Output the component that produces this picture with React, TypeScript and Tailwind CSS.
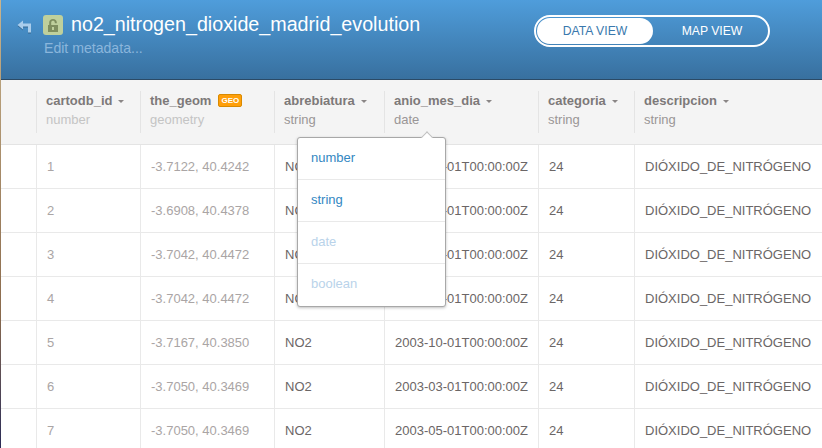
const COLUMNS = [
  { name: 'cartodb_id', type: 'number', muted: true },
  { name: 'the_geom', type: 'geometry', muted: true, geo: true },
  { name: 'abrebiatura', type: 'string' },
  { name: 'anio_mes_dia', type: 'date' },
  { name: 'categoria', type: 'string' },
  { name: 'descripcion', type: 'string' },
];

const ROWS = [
  ['1', '-3.7122, 40.4242', 'NO2', '2003-01-01T00:00:00Z', '24', 'DIÓXIDO_DE_NITRÓGENO'],
  ['2', '-3.6908, 40.4378', 'NO2', '2003-02-01T00:00:00Z', '24', 'DIÓXIDO_DE_NITRÓGENO'],
  ['3', '-3.7042, 40.4472', 'NO2', '2003-04-01T00:00:00Z', '24', 'DIÓXIDO_DE_NITRÓGENO'],
  ['4', '-3.7042, 40.4472', 'NO2', '2003-06-01T00:00:00Z', '24', 'DIÓXIDO_DE_NITRÓGENO'],
  ['5', '-3.7167, 40.3850', 'NO2', '2003-10-01T00:00:00Z', '24', 'DIÓXIDO_DE_NITRÓGENO'],
  ['6', '-3.7050, 40.3469', 'NO2', '2003-03-01T00:00:00Z', '24', 'DIÓXIDO_DE_NITRÓGENO'],
  ['7', '-3.7050, 40.3469', 'NO2', '2003-05-01T00:00:00Z', '24', 'DIÓXIDO_DE_NITRÓGENO'],
];

const TYPE_OPTIONS = [
  { label: 'number', enabled: true },
  { label: 'string', enabled: true },
  { label: 'date', enabled: false },
  { label: 'boolean', enabled: false },
];

function BackIcon() {
  return (
    <svg width="15" height="13" viewBox="0 0 15 13" className="mt-[2px] drop-shadow-[0_1px_0_rgba(0,0,0,0.25)]">
      <path d="M0.5 5 L6 0.5 V3.5 H14 V12.5 H11 V6.5 H6 V9.5 Z" fill="#a9cdec" />
    </svg>
  );
}

function LockBadge() {
  return (
    <div className="flex h-5 w-5 items-center justify-center rounded-[3px] bg-[#bfd09c]">
      <svg width="10" height="13" viewBox="0 0 10 13">
        <path
          fillRule="evenodd"
          d="M0 6 H1.2 V3.4 C1.2 1.3 2.8 0 5 0 C7.2 0 8.8 1.3 8.8 3.4 V4.2 H6.8 V3.4 C6.8 2.4 6 1.8 5 1.8 C4 1.8 3.2 2.4 3.2 3.4 V6 H10 V13 H0 Z M4 8 V11 H6 V8 Z"
          fill="#7f8f5f"
        />
      </svg>
    </div>
  );
}

function Caret() {
  return <span className="ml-[6px] mt-[1px] inline-block border-x-[3px] border-t-[3px] border-x-transparent border-t-[#8a8686]" />;
}

export default function App() {
  return (
    <div className="relative flex h-[448px] w-[822px] overflow-hidden bg-white font-['Liberation_Sans',Arial,sans-serif]">
      {/* sliver of desktop behind the window */}
      <div className="w-px shrink-0 bg-gradient-to-b from-[#c9b48c] via-[#8a6a4c] via-70% to-[#2b2a55]" />

      <div className="min-w-0 flex-1">
        <header className="flex h-[80px] items-start justify-between border-b border-[#2b4a66] bg-gradient-to-b from-[#4f9ddb] to-[#38709f] pl-[16px] pr-[52px]">
          <div className="pt-[15px]">
            <div className="flex h-5 items-center">
              <BackIcon />
              <div className="ml-[11px]">
                <LockBadge />
              </div>
              <h1 className="ml-[8px] -translate-y-px text-[19.7px] leading-5 text-white">no2_nitrogen_dioxide_madrid_evolution</h1>
            </div>
            <p className="ml-[27px] mt-[3px] text-[14.1px] leading-5 text-[#8bb6dc]">Edit metadata...</p>
          </div>

          <div className="mt-[15px] flex h-[32px] w-[236px] items-center rounded-full border-2 border-white p-px text-[12.2px]">
            <div className="flex h-[26px] w-[116px] items-center justify-center rounded-full bg-white text-[#3a78ad]">DATA VIEW</div>
            <div className="flex-1 pl-[4px] text-center text-white">MAP VIEW</div>
          </div>
        </header>

        <div className="grid grid-cols-[35px_104px_134px_110px_154px_96px_1fr] text-[13px]">
          {/* head */}
          <div className="col-span-7 grid h-[65px] grid-cols-subgrid items-center border-b border-[#e4e4e4] bg-[#f4f4f4] pb-px">
            <div />
            {COLUMNS.map((col) => (
              <div key={col.name} className="h-[42px] border-l border-[#e4e4e4] pl-[9px]">
                <div className="flex h-[20px] items-center font-bold text-[#7d7979]">
                  {col.name}
                  {col.geo ? (
                    <span className="ml-[7px] flex h-[13px] w-[24px] items-center justify-center rounded-[2px] border border-[#d98a00] bg-[#ff9f0a] text-[8px] font-bold text-white">
                      GEO
                    </span>
                  ) : (
                    <Caret />
                  )}
                </div>
                <div className={`-mt-px leading-5 ${col.muted ? 'text-[#c4c4c4]' : 'text-[#9a9696]'}`}>{col.type}</div>
              </div>
            ))}
          </div>

          {/* rows */}
          {ROWS.map((row) => (
            <div key={row[0]} className="col-span-7 grid h-[44px] grid-cols-subgrid border-b border-[#e9e9e9]">
              <div />
              {row.map((cell, i) => (
                <div
                  key={i}
                  className={`flex items-center border-l border-[#e9e9e9] pl-[10px] ${i < 2 ? 'text-[#aaa5a5]' : 'text-[#6b6666]'}`}
                >
                  {cell}
                </div>
              ))}
            </div>
          ))}
        </div>
      </div>

      {/* column type menu */}
      <div className="absolute left-[297px] top-[137px] w-[149px] rounded-[3px] border border-[#a8a8a8] bg-white text-[13px] shadow-[0_1px_3px_rgba(0,0,0,0.25)]">
        <span className="absolute right-[14px] top-[-5px] h-[8px] w-[8px] rotate-45 border-l border-t border-[#c0c0c0] bg-white" />
        {TYPE_OPTIONS.map((opt) => (
          <div
            key={opt.label}
            className={`relative flex h-[42px] items-center border-b border-[#e9e9e9] pb-[2px] pl-[13px] last:border-b-0 ${opt.enabled ? 'text-[#3387c2]' : 'text-[#b9d3ea]'}`}
          >
            {opt.label}
          </div>
        ))}
      </div>
    </div>
  );
}
